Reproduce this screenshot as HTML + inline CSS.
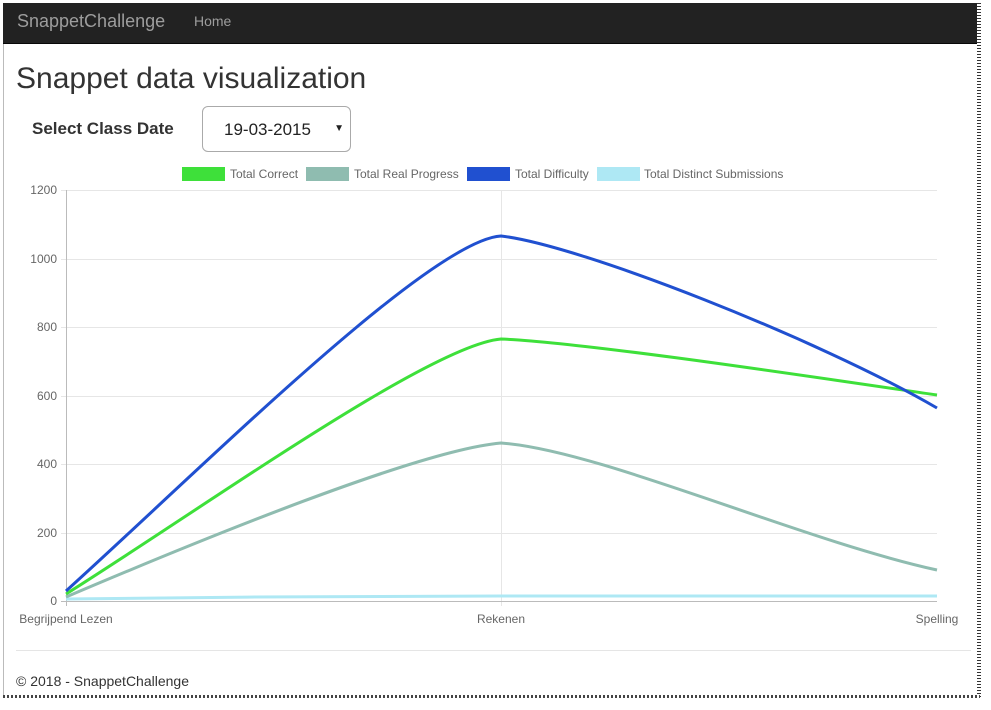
<!DOCTYPE html>
<html><head><meta charset="utf-8"><style>
html,body{margin:0;padding:0;background:#fff;width:991px;height:710px;overflow:hidden;font-family:"Liberation Sans",Arial,sans-serif;}
.frame{position:absolute;left:3px;top:3px;width:976px;height:693px;background:#fff;border-left:1px solid #bbb;}
.nav{position:absolute;left:3px;top:3px;width:976px;height:40px;background:#222;border-bottom:1px solid #080808;}
.brand{position:absolute;left:14px;top:8px;font-size:18px;color:#9d9d9d;}
.home{position:absolute;left:191px;top:10px;font-size:14px;color:#9d9d9d;}
h1{position:absolute;left:16px;top:62px;margin:0;font-weight:normal;font-size:30px;color:#333;}
.lbl{position:absolute;left:32px;top:119px;font-weight:bold;font-size:17px;color:#333;}
.sel{position:absolute;left:202px;top:106px;width:149px;height:46px;border:1px solid #aaa;border-radius:6px;box-sizing:border-box;font-size:17px;color:#222;}
.sel span{position:absolute;left:21px;top:13px;}
.sel i{position:absolute;right:6px;top:16px;font-style:normal;font-size:10px;}
.hr{position:absolute;left:16px;top:650px;width:955px;border-top:1px solid #e5e5e5;}
.foot{position:absolute;left:16px;top:673px;font-size:14px;color:#333;}
.edge{position:absolute;left:977px;top:3px;width:4px;height:694px;background:repeating-linear-gradient(180deg,#333 0 1px,#fff 1px 3px);}
.edgeb{position:absolute;left:3px;top:695px;width:977px;height:3px;background:repeating-linear-gradient(90deg,#444 0 2px,#fff 2px 4px);}
</style></head><body>
<div class="frame"></div>
<div class="nav"><div class="brand">SnappetChallenge</div><div class="home">Home</div></div>
<h1>Snappet data visualization</h1>
<div class="lbl">Select Class Date</div>
<div class="sel"><span>19-03-2015</span><i>▼</i></div>
<svg style="position:absolute;left:0;top:0" width="991" height="710">
<g font-family="Liberation Sans,Arial,sans-serif" font-size="12" fill="#666">
<rect x="182" y="167" width="43" height="14" fill="#3ee03a"/><text x="230" y="178">Total Correct</text>
<rect x="306" y="167" width="43" height="14" fill="#8fbcb0"/><text x="354" y="178">Total Real Progress</text>
<rect x="467" y="167" width="43" height="14" fill="#2050d0"/><text x="515" y="178">Total Difficulty</text>
<rect x="597" y="167" width="43" height="14" fill="#aee8f4"/><text x="644" y="178">Total Distinct Submissions</text>
</g>
<g stroke="#e6e6e6" stroke-width="1">
<line x1="61" y1="190.5" x2="937" y2="190.5"/><line x1="61" y1="259.5" x2="937" y2="259.5"/>
<line x1="61" y1="327.5" x2="937" y2="327.5"/><line x1="61" y1="396.5" x2="937" y2="396.5"/>
<line x1="61" y1="464.5" x2="937" y2="464.5"/><line x1="61" y1="533.5" x2="937" y2="533.5"/>
<line x1="501.5" y1="190" x2="501.5" y2="606"/>
</g>
<g stroke="#bbb"><line x1="61" y1="601.5" x2="937" y2="601.5"/><line x1="66.5" y1="190" x2="66.5" y2="606"/></g>
<g font-family="Liberation Sans,Arial,sans-serif" font-size="12" fill="#666" text-anchor="end">
<text x="57" y="194">1200</text><text x="57" y="263">1000</text><text x="57" y="331">800</text><text x="57" y="400">600</text><text x="57" y="468">400</text><text x="57" y="537">200</text><text x="57" y="605">0</text>
</g>
<g font-family="Liberation Sans,Arial,sans-serif" font-size="12" fill="#666" text-anchor="middle">
<text x="66" y="623">Begrijpend Lezen</text><text x="501" y="623">Rekenen</text><text x="937" y="623">Spelling</text>
</g>
<g fill="none" stroke-width="3">
<path d="M66,599 C200,597 400,596 501,596 L937,596" stroke="#aee8f4"/>
<path d="M66,597 C200,540 420,450 501,443 C600,450 800,540 937,570" stroke="#8fbcb0"/>
<path d="M66,594 C200,510 430,345 501,339 C580,342 800,375 937,395" stroke="#3ee03a"/>
<path d="M66,591 C200,470 430,240 501,236 C580,245 820,340 937,408" stroke="#2050d0"/>
</g>
</svg>
<div class="hr"></div>
<div class="foot">© 2018 - SnappetChallenge</div>
<div class="edge"></div>
<div class="edgeb"></div>
</body></html>
